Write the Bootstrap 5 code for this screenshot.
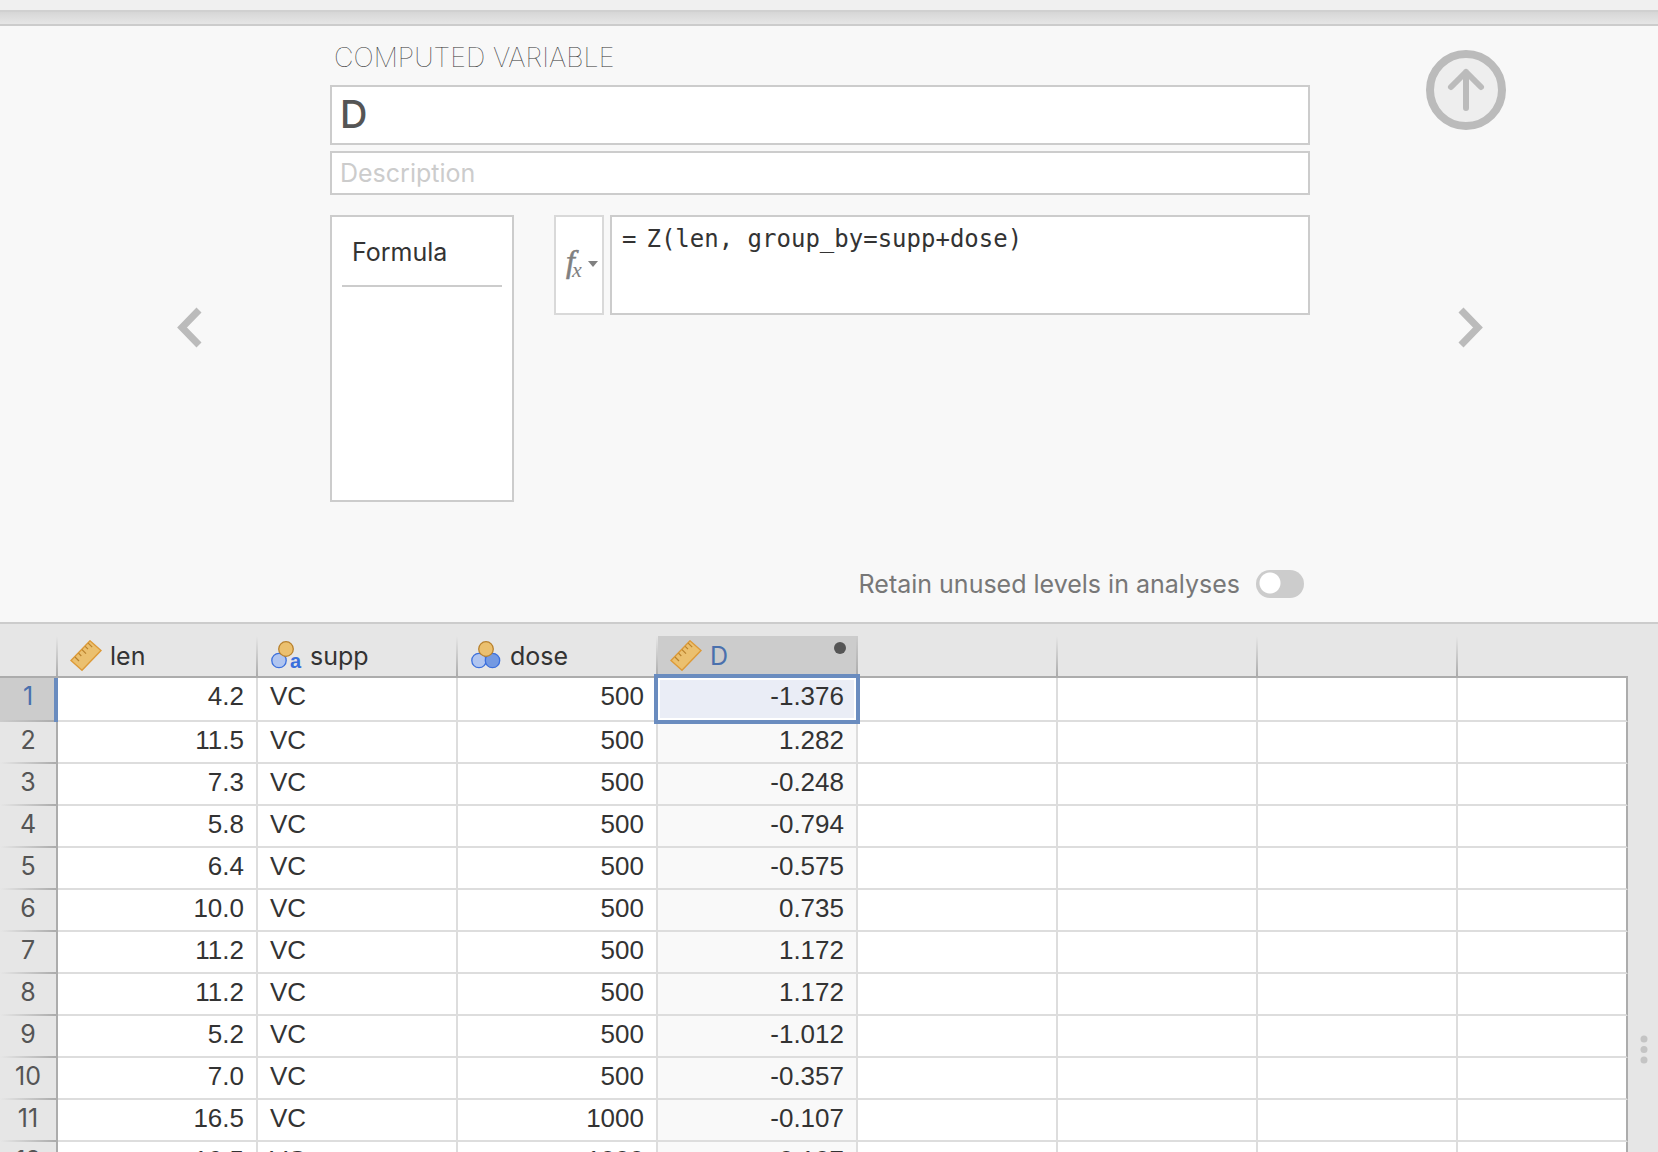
<!DOCTYPE html>
<html lang="en">
<head>
<meta charset="utf-8">
<meta name="viewport" content="width=device-width, initial-scale=1">
<title>Computed variable</title>
<link href="https://cdn.jsdelivr.net/npm/bootstrap@5.3.0/dist/css/bootstrap.min.css" rel="stylesheet">
<style>
  :root { --line: #ccc; --edge: #acacac; --sel: #6a8cbf; }
  body { font-family: Inter, "Liberation Sans", sans-serif; font-size: 25px; color: #333; background: #e6e6e6; height: 100vh; overflow: hidden; }
  .ribbon-edge { height: 12px; background: #f0f0f0; border-bottom: 2px solid #d0d0d0; }
  .ribbon-shade { height: 14px; background: linear-gradient(#d6d6d6, #e6e6e6); border-bottom: 2px solid var(--line); }
  .editor { background: #f8f8f8; border-bottom: 2px solid var(--line); }
  .side-prev { width: 330px; padding-left: 174px; }
  .side-next { width: 348px; padding: 24px 0 0 116px; }
  .nav-arrow { width: 30px; height: 42px; }
  .side-prev .nav-arrow { margin-top: 280px; }
  .side-next .nav-arrow { margin: 176px 0 0 30px; }
  .plain-btn { border: 0; background: none; padding: 0; display: block; }
  .plain-btn svg { display: block; }
  .kind-title { font-size: 27px; font-weight: 100; line-height: 40px; padding: 12px 4px 7px; margin: 0; color: #333; }
  .field { border: 2px solid var(--line); border-radius: 0; background: #fff; color: #333; padding: 0 8px; width: 100%; display: block; }
  .field::placeholder { color: #ccc; opacity: 1; }
  .field-name { height: 60px; font-size: 38px; font-weight: 500; color: #555; padding-bottom: 2px; }
  .field-desc { height: 44px; margin-top: 6px; }
  .var-setup { margin-top: 20px; }
  .kinds { width: 184px; height: 287px; border: 2px solid var(--line); background: #fff; padding: 10px; margin-right: 40px; }
  .kinds .plain-btn { width: 100%; text-align: left; color: #333; line-height: 36px; padding: 7px 10px 15px; border-bottom: 2px solid var(--line); }
  .fx-btn { width: 50px; height: 100px; border: 2px solid #d9d9d9; background: #fff; padding: 0; margin-right: 6px; }
  .fx-btn svg { display: block; }
  .formula { height: 100px; border: 2px solid var(--line); background: #fff; padding: 4px 10px; gap: 10px; font: 24px/36px "DejaVu Sans Mono", monospace; }
  .formula textarea { border: 0; outline: 0; resize: none; padding: 0; background: none; color: inherit; font: inherit; overflow: hidden; }
  .retain { color: #777; padding: 64px 6px 20px 0; line-height: 36px; }
  .toggle { appearance: none; width: 48px; height: 28px; border-radius: 14px; margin: 0; background: radial-gradient(circle at 14px 13px, #fff 9px, #fff 10px, #ccc 11px); }
  .sheet { min-height: 0; overflow: hidden; padding-top: 12px; }
  .grid-wrap { min-width: 0; }
  .data-grid { table-layout: fixed; width: 100%; border-collapse: separate; border-spacing: 0; line-height: 36px; }
  .col-rows { width: 58px; }
  .col-var { width: 200px; }
  .data-grid th { font-weight: 400; padding: 0; }
  .data-grid thead th { height: 42px; line-height: 40px; border-bottom: 2px solid var(--edge); vertical-align: top;
    background: linear-gradient(#acacac00, var(--edge)) right / 2px 100% no-repeat; }
  .data-grid thead th:last-child { background: none; }
  .data-grid thead th.picked { background-color: #ccc; color: #4a70ad; position: relative; }
  .data-grid thead svg { flex: none; }
  .col-label { padding-left: 12px; gap: 8px; height: 40px; }
  .dot { position: absolute; right: 12px; top: 6px; width: 12px; height: 12px; border-radius: 50%; background: #555; }
  .data-grid tbody th { text-align: center; color: #555; height: 42px; border-right: 2px solid var(--edge); vertical-align: top;
    background: linear-gradient(90deg, #acacac00, var(--edge)) bottom / 100% 2px no-repeat; }
  .data-grid td { font-family: "Liberation Sans", Arial, sans-serif; font-size: 26px; height: 42px; padding: 0 12px; background: #fff; border-right: 2px solid #ddd; border-bottom: 2px solid #ddd; vertical-align: top; }
  .data-grid td:last-child { border-right-color: var(--edge); }
  .data-grid td.calc { background: #f9f9f9; }
  .data-grid tbody tr:first-child > * { height: 44px; }
  .data-grid tbody th.picked { color: #4a70ad; border-right-color: var(--sel); box-shadow: inset -2px 0 var(--sel);
    background: linear-gradient(90deg, #acacac00, var(--edge)) bottom / 100% 2px no-repeat, #ccc; }
  .data-grid td.current { position: relative; background: #eaedf6; }
  .data-grid td.current::after { content: ""; position: absolute; inset: -4px; border: 4px solid var(--sel); box-shadow: inset 0 0 0 2px #fff; }
  .num { text-align: right; }
  .splitter { width: 30px; }
  .grip { padding: 399px 0 0 12px; }
</style>
</head>
<body class="d-flex flex-column">
<div class="ribbon-edge flex-shrink-0"></div>
<div class="ribbon-shade flex-shrink-0"></div>

<main class="editor d-flex align-items-start flex-shrink-0">
  <div class="side-prev flex-shrink-0">
    <button class="plain-btn nav-arrow" type="button" aria-label="Previous variable">
      <svg width="30" height="42" fill="none" stroke="#bbb" stroke-width="7"><path d="M25 4 8 21.500l17 17.500"/></svg>
    </button>
  </div>

  <form class="flex-grow-1">
    <h1 class="kind-title">COMPUTED VARIABLE</h1>
    <input class="field field-name" type="text" value="D" aria-label="Name">
    <input class="field field-desc" type="text" placeholder="Description" aria-label="Description">
    <div class="var-setup d-flex align-items-start">
      <div class="kinds flex-shrink-0"><button class="plain-btn" type="button">Formula</button></div>
      <button class="fx-btn flex-shrink-0" type="button" aria-label="Functions">
        <svg width="46" height="96" fill="#808080" font-family="Liberation Serif" font-style="italic"><text x="10" y="55" font-size="32" stroke="#808080" stroke-width=".6">f</text><text x="16" y="60" font-size="22">x</text><path d="M32 44h10l-5 6z"/></svg>
      </button>
      <div class="formula d-flex flex-grow-1">
        <label for="formula">=</label>
        <textarea id="formula" class="flex-grow-1" spellcheck="false">Z(len, group_by=supp+dose)</textarea>
      </div>
    </div>
    <div class="retain d-flex justify-content-end align-items-center gap-3">
      <label for="retain">Retain unused levels in analyses</label>
      <input id="retain" class="toggle" type="checkbox" role="switch">
    </div>
  </form>

  <div class="side-next flex-shrink-0">
    <button class="plain-btn" type="button" aria-label="Close editor">
      <svg width="80" height="80"><circle cx="40" cy="40" r="36" fill="#eee" stroke="#bbb" stroke-width="8"/><path d="M40 58V22M25 37l15-15 15 15" fill="none" stroke="#bbb" stroke-width="6" stroke-linecap="round" stroke-linejoin="round"/></svg>
    </button>
    <button class="plain-btn nav-arrow" type="button" aria-label="Next variable">
      <svg width="30" height="42" fill="none" stroke="#bbb" stroke-width="7"><path d="M5 4l17 17.500L5 39"/></svg>
    </button>
  </div>
</main>

<svg width="0" height="0" class="position-absolute" aria-hidden="true">
  <symbol id="ruler" viewBox="0 0 32 32"><path d="M1 20.500 20 .800 31 10.500 12 30.200z" fill="#ebc06f" stroke="#dd9a38" stroke-width="1.400"/><path d="m5 17 4 4M8.500 13.200l2.800 2.800M12 9.700l4 4M15.200 6.300l2.800 2.800M18.200 3.200l4 4" stroke="#b9822e" stroke-width="1.200"/></symbol>
</svg>

<section class="sheet d-flex flex-grow-1">
  <div class="grid-wrap flex-grow-1">
    <table class="data-grid">
      <colgroup><col class="col-rows"><col class="col-var" span="7"><col></colgroup>
      <thead>
        <tr>
          <th></th>
          <th><div class="col-label d-flex align-items-center"><svg width="32" height="32"><use href="#ruler"/></svg>len</div></th>
          <th><div class="col-label d-flex align-items-center"><svg width="32" height="32"><circle cx="9" cy="20.500" r="7.200" fill="#b0c5f0" stroke="#3b6fdc" stroke-width="1.300"/><circle cx="16" cy="9" r="7.300" fill="#ebc06f" stroke="#b9822e" stroke-width="1.300"/><text x="20" y="28" font-family="Liberation Sans" font-weight="700" font-size="20" fill="#3b6fdc">a</text></svg>supp</div></th>
          <th><div class="col-label d-flex align-items-center"><svg width="32" height="32"><circle cx="9" cy="20.500" r="7.200" fill="#b0c5f0" stroke="#3b6fdc" stroke-width="1.300"/><circle cx="22.500" cy="20.500" r="7.200" fill="#7399e2" stroke="#3b6fdc" stroke-width="1.300"/><circle cx="16" cy="9" r="7.300" fill="#ebc06f" stroke="#b9822e" stroke-width="1.300"/></svg>dose</div></th>
          <th class="picked"><div class="col-label d-flex align-items-center"><svg width="32" height="32"><use href="#ruler"/></svg>D</div><span class="dot"></span></th>
          <th></th><th></th><th></th><th></th>
        </tr>
      </thead>
      <tbody>
        <tr><th class="picked">1</th><td class="num">4.2</td><td>VC</td><td class="num">500</td><td class="num current">-1.376</td><td></td><td></td><td></td><td></td></tr>
        <tr><th>2</th><td class="num">11.5</td><td>VC</td><td class="num">500</td><td class="num calc">1.282</td><td></td><td></td><td></td><td></td></tr>
        <tr><th>3</th><td class="num">7.3</td><td>VC</td><td class="num">500</td><td class="num calc">-0.248</td><td></td><td></td><td></td><td></td></tr>
        <tr><th>4</th><td class="num">5.8</td><td>VC</td><td class="num">500</td><td class="num calc">-0.794</td><td></td><td></td><td></td><td></td></tr>
        <tr><th>5</th><td class="num">6.4</td><td>VC</td><td class="num">500</td><td class="num calc">-0.575</td><td></td><td></td><td></td><td></td></tr>
        <tr><th>6</th><td class="num">10.0</td><td>VC</td><td class="num">500</td><td class="num calc">0.735</td><td></td><td></td><td></td><td></td></tr>
        <tr><th>7</th><td class="num">11.2</td><td>VC</td><td class="num">500</td><td class="num calc">1.172</td><td></td><td></td><td></td><td></td></tr>
        <tr><th>8</th><td class="num">11.2</td><td>VC</td><td class="num">500</td><td class="num calc">1.172</td><td></td><td></td><td></td><td></td></tr>
        <tr><th>9</th><td class="num">5.2</td><td>VC</td><td class="num">500</td><td class="num calc">-1.012</td><td></td><td></td><td></td><td></td></tr>
        <tr><th>10</th><td class="num">7.0</td><td>VC</td><td class="num">500</td><td class="num calc">-0.357</td><td></td><td></td><td></td><td></td></tr>
        <tr><th>11</th><td class="num">16.5</td><td>VC</td><td class="num">1000</td><td class="num calc">-0.107</td><td></td><td></td><td></td><td></td></tr>
        <tr><th>12</th><td class="num">16.5</td><td>VC</td><td class="num">1000</td><td class="num calc">-0.107</td><td></td><td></td><td></td><td></td></tr>
      </tbody>
    </table>
  </div>
  <div class="splitter flex-shrink-0"><div class="grip"><svg class="d-block" width="8" height="30" fill="#c4c4c4"><circle cx="4" cy="4" r="3.500"/><circle cx="4" cy="14.500" r="3.500"/><circle cx="4" cy="25" r="3.500"/></svg></div></div>
</section>
<script src="https://cdn.jsdelivr.net/npm/bootstrap@5.3.0/dist/js/bootstrap.bundle.min.js"></script>
</body>
</html>
